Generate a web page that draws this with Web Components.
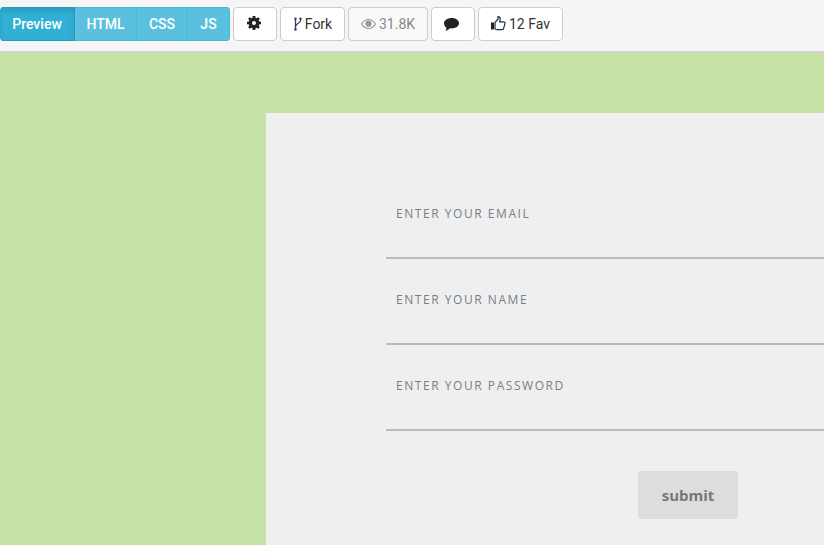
<!DOCTYPE html>
<html>
<head>
<meta charset="utf-8">
<style>
html, body { margin: 0; height: 100%; overflow: hidden; }
body { display: flex; flex-direction: column; }
</style>
</head>
<body>
<pen-toolbar>
    <tab-group>
        <tab-item active>Preview</tab-item>
        <tab-item style="width:62px">HTML</tab-item>
        <tab-item style="width:51px">CSS</tab-item>
        <tab-item style="width:42px">JS</tab-item>
    </tab-group>
    <tool-button style="width:44px">
        <svg slot="icon" width="14" height="14" viewBox="0 0 14 14" style="margin:-3px 0 0 -3px"><path fill="#222" fill-rule="evenodd" d="M5.700 0h2.600l.3 1.900 1 .4L11.200 1.200 12.800 2.800 11.700 4.400l.4 1 1.900.3v2.600l-1.900.3-.4 1 1.100 1.600-1.600 1.600-1.600-1.100-1 .4-.3 1.900H5.700l-.3-1.900-1-.4-1.600 1.100-1.600-1.600 1.100-1.600-.4-1L0 8.300V5.700l1.900-.3.4-1L1.200 2.800 2.800 1.200 4.400 2.300l1-.4zM7 5a2 2 0 1 0 0 4 2 2 0 0 0 0-4z"/></svg>
    </tool-button>
    <tool-button style="width:65px">
        <svg slot="icon" width="9" height="14" viewBox="0 0 9 14"><g fill="none" stroke="#40365a" stroke-width="1.300"><path d="M2.500 2v11"/><path d="M7.500 2v1.500C7.500 6.500 2.500 6.500 2.500 9.500"/></g><circle cx="2.500" cy="1.800" r="1.200" fill="#40365a"/><circle cx="7.500" cy="1.800" r="1.200" fill="#40365a"/><circle cx="2.500" cy="12.500" r="1.200" fill="#40365a"/></svg>
        Fork
    </tool-button>
    <tool-button style="width:80px" muted>
        <svg slot="icon" width="15" height="10" viewBox="0 0 15 10"><path fill="#999" fill-rule="evenodd" d="M7.500 0C10.800 0 13.500 2 15 5c-1.500 3-4.200 5-7.500 5S1.500 8 0 5C1.500 2 4.200 0 7.500 0zm0 1.100C5 1.100 2.700 2.600 1.300 5c1.400 2.400 3.700 3.900 6.200 3.900s4.800-1.500 6.200-3.900C12.300 2.600 10 1.100 7.500 1.100z"/><circle cx="7.500" cy="4.700" r="3.100" fill="#999"/></svg>
        31.8K
    </tool-button>
    <tool-button style="width:44px">
        <svg slot="icon" width="15" height="13" viewBox="0 0 15 13" style="margin-left:-3px"><path fill="#222" d="M7.800 0C11.700 0 15 2.200 15 5.200s-3.300 5.200-7.200 5.200c-.6 0-1.200 0-1.800-.1C4.900 11.500 3.300 12.500 1.300 13c.7-.9 1.100-1.900 1.200-3.300C1 8.800 0 7.100 0 5.200 0 2.200 3.900 0 7.800 0z"/></svg>
    </tool-button>
    <tool-button style="width:85px">
        <svg slot="icon" width="15" height="15" viewBox="0 0 15 15" style="margin-top:-2px"><path fill="#222" d="M0 6.500h3v7H0z"/><path fill="none" stroke="#1c2f44" stroke-width="1.200" d="M4 6.500 7 3.200V.7c1.400 0 2.200 1 2.200 2.300L8.700 5.800h3.900c1.100 0 1.700.9 1.400 1.800l-1.500 5c-.2.700-.7 1.100-1.400 1.100H6.200C5 13.700 4 13.200 4 12.500z"/></svg>
        12 Fav
    </tool-button>
</pen-toolbar>
<preview-pane>
    <login-form>
        <form-field>ENTER YOUR EMAIL</form-field>
        <form-field>ENTER YOUR NAME</form-field>
        <form-field>ENTER YOUR PASSWORD</form-field>
        <submit-button>submit</submit-button>
    </login-form>
</preview-pane>

<script>
function shadowEl(name, css, html) {
    customElements.define(name, class extends HTMLElement {
        constructor() {
            super();
            this.root = this.attachShadow({ mode: "open" });
            this.root.innerHTML = `<style>${css}</style>${html}`;
        }
    });
}

shadowEl("pen-toolbar", `
    :host {
        display: flex;
        flex: none;
        box-sizing: border-box;
        height: 53px;
        padding-top: 7px;
        gap: 3px;
        background: #f5f5f5;
        border-bottom: 2px solid #d0d0d0;
        font: 14px Roboto, sans-serif;
    }
`, `<slot></slot>`);

shadowEl("tab-group", `
    :host {
        display: flex;
        height: 34px;
        border-radius: 4px;
        overflow: hidden;
    }
`, `<slot></slot>`);

shadowEl("tab-item", `
    :host {
        display: flex;
        align-items: center;
        justify-content: center;
        box-sizing: border-box;
        height: 34px;
        background: #5bc0de;
        border: 1px solid #46b8da;
        border-left-width: 0;
        color: #fff;
        font-weight: 500;
    }
    :host([active]) {
        width: 75px;
        background: #31b0d5;
        border-color: #269abc;
        box-shadow: inset 0 3px 5px rgba(0,0,0,.125);
    }
`, `<slot></slot>`);

shadowEl("tool-button", `
    :host {
        display: flex;
        align-items: center;
        justify-content: center;
        gap: 3px;
        box-sizing: border-box;
        height: 34px;
        background: #fff;
        border: 1px solid #ccc;
        border-radius: 4px;
        color: #333;
    }
    :host([muted]) {
        background: #f9f9f9;
        color: #888;
    }
    ::slotted(svg) { flex: none; }
`, `<slot name="icon"></slot><slot></slot>`);

shadowEl("preview-pane", `
    :host {
        display: flex;
        flex: 1;
        min-height: 0;
        box-sizing: border-box;
        padding: 60px 0 0 266px;
        background: #c6e1a5;
        overflow: hidden;
    }
`, `<slot></slot>`);

shadowEl("login-form", `
    :host {
        display: block;
        flex: 1;
        min-width: 0;
        box-sizing: border-box;
        padding: 60px 0 0 120px;
        background: #efefef;
        font: 12px "Open Sans", sans-serif;
    }
`, `<slot></slot>`);

shadowEl("form-field", `
    :host {
        display: block;
        box-sizing: border-box;
        height: 86px;
        padding: 33px 0 0 10px;
        border-bottom: 2px solid #bbb;
        color: #757f88;
        letter-spacing: 1.55px;
        line-height: 16px;
    }
`, `<slot></slot>`);

shadowEl("submit-button", `
    :host {
        display: flex;
        align-items: center;
        justify-content: center;
        box-sizing: border-box;
        width: 100px;
        height: 48px;
        margin: 40px 0 0 252px;
        background: #ddd;
        border-radius: 3px;
        color: #777;
        font-size: 15px;
        font-weight: 700;
    }
`, `<slot></slot>`);
</script>
</body>
</html>
